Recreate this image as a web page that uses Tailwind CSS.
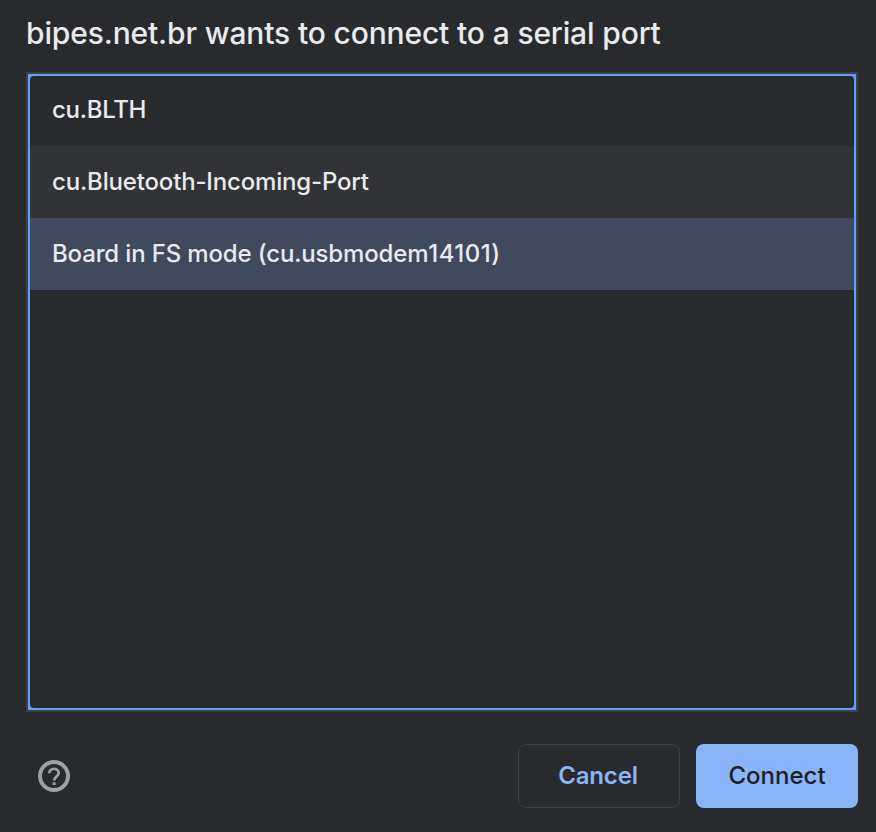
<!DOCTYPE html>
<html lang="en"><head><meta charset="utf-8"><title>Serial port</title>
<script src="https://cdn.jsdelivr.net/npm/@tailwindcss/browser@4"></script></head>
<body class="bg-[#292a2d]">
<main class="flex h-[832px] w-[876px] flex-col overflow-hidden bg-[#292a2d] pl-[26px] pr-[18px] font-['Inter',sans-serif] text-[#e8eaed]">
<h1 class="mt-[13px] h-10 whitespace-nowrap text-[30px] font-[450] leading-10 tracking-[-0.145px]">bipes.net.br wants to connect to a serial port</h1>
<div class="mt-[19px] h-[640px] border-2 border-[#3c4043] bg-[#669df6] p-[2px]">
<ul class="h-full overflow-hidden rounded-[4px] bg-[#292a2d] text-2xl font-[450]">
<li class="flex h-[70px] items-center pb-[2px] pl-[22px] tracking-[-0.3px]">cu.BLTH</li>
<li class="flex h-[72px] items-center bg-[#323336] pl-[22px] tracking-[-0.17px]">cu.Bluetooth-Incoming-Port</li>
<li class="flex h-[72px] items-center bg-[#414a5d] pl-[22px]"><span class="tracking-[-0.15px]">Board in FS mode (cu.usbmodem</span><span class="tracking-[0.45px]">14101)</span></li>
</ul></div>
<footer class="mt-8 flex h-16 items-center">
<svg class="ml-3 size-8" viewBox="0 0 32 32" fill="none" stroke="#9aa0a6"><circle cx="16" cy="16" r="14" stroke-width="4"/><path d="M11.300 13.200c0-2.600 2-4.400 4.700-4.400s4.700 1.800 4.700 4.200c0 3.700-4.500 3.500-4.500 7.600" stroke-width="2.800"/><path d="M14.700 22.300h2.900v2.700h-2.900z" fill="#9aa0a6" stroke="none"/></svg>
<button class="ml-auto h-16 w-[162px] rounded-lg border border-[#3c4043] pr-[2px] text-2xl font-semibold tracking-[-0.15px] text-[#8ab4f8]">Cancel</button>
<button class="ml-4 h-16 w-[162px] rounded-lg bg-[#8ab4f8] text-2xl font-medium text-[#202124]">Connect</button>
</footer></main></body></html>
